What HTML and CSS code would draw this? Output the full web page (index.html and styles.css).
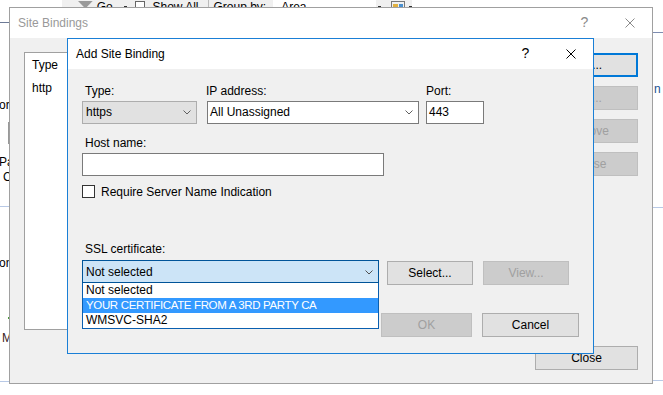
FILE: index.html
```html
<!DOCTYPE html>
<html lang="en">
<head>
<meta charset="utf-8">
<title>Add Site Binding</title>
<link rel="stylesheet" href="styles.css">
</head>
<body>
<div class="screen">
  <div class="bg">
    <div class="toolbar">
      <svg class="tb-funnel" width="15" height="7" viewBox="0 0 15 7"><path d="M0 1 H15 L9 7 H6 Z" fill="#9a9a9a"/></svg>
      <span class="tb-text tb-go">Go</span>
      <span class="tb-dash"></span>
      <span class="tb-check"></span>
      <span class="tb-text">Show All</span>
      <span class="tb-sep"></span>
      <span class="tb-text">Group by:</span>
      <span class="tb-field">Area</span>
      <span class="tb-dash tb-dash2"></span>
      <span class="tb-icon"><span class="tb-icon-a"></span><span class="tb-icon-b"></span></span>
      <span class="tb-dash tb-dash3"></span>
    </div>
    <span class="line line-dark l-22"></span>
    <span class="line line-navy r-32"></span>
    <span class="line line-light l-206"></span>
    <span class="line line-light r-207"></span>
    <span class="line line-light l-381"></span>
    <span class="line line-light r-380"></span>
    <span class="frag f-or">or</span>
    <span class="frag-box"></span>
    <span class="frag f-pa">Pa</span>
    <span class="frag f-c">C</span>
    <span class="frag f-on">on</span>
    <span class="frag-green"></span>
    <span class="frag f-m">M</span>
    <span class="frag f-n">n</span>
  </div>

  <div class="win sb">
    <div class="titlebar inactive">
      <span class="title">Site Bindings</span>
      <span class="cap cap-help">?</span>
      <span class="cap cap-close"><svg width="10" height="10" viewBox="0 0 10 10"><path d="M0.5 0.5 L9.5 9.5 M9.5 0.5 L0.5 9.5" stroke="#8a8a8a" stroke-width="1"/></svg></span>
    </div>
    <div class="sb-body">
      <div class="sb-list">
        <div class="sb-head">Type</div>
        <div class="sb-row">http</div>
      </div>
      <div class="sb-buttons">
        <div class="btn btn-default">Add...</div>
        <div class="btn btn-disabled">Edit...</div>
        <div class="btn btn-disabled">Remove</div>
        <div class="btn btn-disabled">Browse</div>
        <div class="btn sb-close">Close</div>
      </div>
    </div>
  </div>

  <div class="win asb">
    <div class="titlebar">
      <span class="title">Add Site Binding</span>
      <span class="cap cap-help">?</span>
      <span class="cap cap-close"><svg width="10" height="10" viewBox="0 0 10 10"><path d="M0.5 0.5 L9.5 9.5 M9.5 0.5 L0.5 9.5" stroke="#000" stroke-width="1"/></svg></span>
    </div>
    <div class="asb-body">
      <div class="row-fields">
        <div class="field f-type">
          <div class="lbl lbl-type">Type:</div>
          <div class="combo combo-ro"><span>https</span><svg class="chev" width="8" height="5" viewBox="0 0 8 5"><path d="M0.5 0.5 L4 4 L7.5 0.5" fill="none" stroke="#606060"/></svg></div>
        </div>
        <div class="field f-ip">
          <div class="lbl lbl-ip">IP address:</div>
          <div class="combo combo-edit"><span>All Unassigned</span><svg class="chev" width="8" height="5" viewBox="0 0 8 5"><path d="M0.5 0.5 L4 4 L7.5 0.5" fill="none" stroke="#606060"/></svg></div>
        </div>
        <div class="field f-port">
          <div class="lbl">Port:</div>
          <div class="textbox port-box">443</div>
        </div>
      </div>

      <div class="field f-host">
        <div class="lbl lbl-type">Host name:</div>
        <div class="textbox host-box"></div>
      </div>

      <div class="check-row">
        <span class="checkbox"></span>
        <span>Require Server Name Indication</span>
      </div>

      <div class="lbl lbl-type lbl-ssl">SSL certificate:</div>
      <div class="ssl-row">
        <div class="ssl-combo-wrap">
          <div class="combo combo-focus"><span>Not selected</span><svg class="chev" width="8" height="5" viewBox="0 0 8 5"><path d="M0.5 0.5 L4 4 L7.5 0.5" fill="none" stroke="#505050"/></svg></div>
          <ul class="dropdown">
            <li>Not selected</li>
            <li class="sel caps">YOUR CERTIFICATE FROM A 3RD PARTY CA</li>
            <li>WMSVC-SHA2</li>
          </ul>
        </div>
        <div class="btn btn-select">Select...</div>
        <div class="btn btn-disabled btn-view">View...</div>
      </div>

      <div class="actions">
        <div class="btn btn-disabled btn-ok">OK</div>
        <div class="btn btn-cancel">Cancel</div>
      </div>
    </div>
  </div>
</div>
</body>
</html>
```

FILE: styles.css
```css
* { box-sizing: border-box; }

body {
  margin: 0;
  font-family: "Liberation Sans", Arial, sans-serif;
  font-size: 12px;
  color: #000;
}

.screen {
  position: relative;
  width: 663px;
  height: 395px;
  overflow: hidden;
  background: #fff;
}

/* ---------- background application (behind the dialogs) ---------- */
.bg { position: absolute; inset: 0; }

.toolbar {
  position: absolute;
  top: 0;
  left: 62px;
  width: 350px;
  height: 16px;
  display: flex;
  align-items: flex-start;
  background: #f0f0f0;
  line-height: 15px;
  color: #000;
}
.tb-funnel { margin: 0 0 0 16px; }
.tb-text { white-space: nowrap; }
.tb-go { margin-left: 4px; }
.tb-dash { width: 3px; height: 1px; background: #333; margin: 6px 0 0 11px; }
.tb-check { width: 11px; height: 11px; border: 1px solid #666; background: #fff; margin: 1px 7px 0 8px; }
.tb-sep { width: 1px; height: 12px; background: #bbb; margin: 0 4px 0 10px; }
.tb-field { width: 105px; background: #fff; padding-left: 8px; margin-left: 7px; align-self: stretch; }
.tb-dash2 { margin-left: 2px; }
.tb-icon { width: 14px; height: 10px; border: 1px solid #777; margin: 1px 0 0 10px; display: flex; gap: 1px; padding: 2px 1px 0; }
.tb-icon-a { width: 5px; height: 5px; background: #e0b040; }
.tb-icon-b { width: 5px; height: 5px; background: #4a90d0; }
.tb-dash3 { margin-left: 4px; }

.line { position: absolute; height: 1px; }
.line-dark { background: #6c7a96; }
.line-navy { background: #7d8cb0; }
.line-light { background: #b8c9e6; }
.l-22 { top: 22px; left: 0; width: 10px; }
.l-206 { top: 206px; left: 0; width: 10px; }
.l-381 { top: 381px; left: 0; width: 10px; }
.r-32 { top: 32px; left: 652px; width: 11px; }
.r-207 { top: 207px; left: 652px; width: 11px; }
.r-380 { top: 380px; left: 652px; width: 11px; }

.frag { position: absolute; line-height: 15px; white-space: nowrap; }
.f-or { left: -1px; top: 98px; }
.f-pa { left: -1px; top: 155px; }
.f-c { left: 3px; top: 170px; }
.f-on { left: -1px; top: 256px; }
.f-m { left: 2px; top: 331px; color: #3a2020; }
.f-n { left: 654px; top: 82px; color: #1d4f91; }
.frag-box { position: absolute; left: 8px; top: 122px; width: 4px; height: 22px; border: 1px solid #999; background: #eee; }
.frag-green { position: absolute; left: 8px; top: 317px; width: 2px; height: 2px; background: #4c9a3a; }

/* ---------- windows ---------- */
.win {
  position: absolute;
  display: flex;
  flex-direction: column;
  background: #f0f0f0;
}

.titlebar {
  height: 30px;
  flex: none;
  display: flex;
  align-items: center;
  background: #fff;
}
.title { flex: 1; padding-left: 8px; white-space: nowrap; }
.inactive .title { color: #999; }
.cap {
  width: 45px;
  height: 30px;
  display: flex;
  align-items: center;
  justify-content: center;
}
.cap-help { font-size: 14px; padding-bottom: 2px; }
.inactive .cap-help { color: #8a8a8a; }

/* Site Bindings */
.sb {
  left: 9px;
  top: 7px;
  width: 644px;
  height: 377px;
  border: 1px solid #a0a0a0;
}
.sb-body {
  flex: 1;
  display: flex;
  gap: 14px;
  padding: 14px 14px 13px 14px;
}
.sb-list {
  flex: 1;
  height: 278px;
  background: #fff;
  border: 1px solid #a0a0a0;
  padding-left: 7px;
}
.sb-head { line-height: 25px; }
.sb-row { line-height: 20px; }
.sb-buttons {
  width: 103px;
  display: flex;
  flex-direction: column;
  gap: 9px;
  padding-top: 1px;
}
.sb-close { margin-top: auto; }

/* Add Site Binding */
.asb {
  left: 67px;
  top: 38px;
  width: 527px;
  height: 316px;
  border: 1px solid #1a7fd6;
}
.asb-body {
  flex: 1;
  display: flex;
  flex-direction: column;
  padding: 15px 14px 0 14px;
}

.row-fields { display: flex; }
.field { display: flex; flex-direction: column; }
.f-type { width: 115px; margin-right: 10px; }
.f-ip { width: 212px; margin-right: 7px; }
.f-port { width: 58px; }

.lbl { line-height: 15px; margin-bottom: 2px; white-space: nowrap; }
.lbl-type { padding-left: 3px; }
.lbl-ip { margin-left: -1px; }

.combo, .textbox {
  height: 23px;
  line-height: 21px;
  white-space: nowrap;
}
.combo {
  display: flex;
  align-items: center;
  justify-content: space-between;
  padding: 0 5px 0 3px;
}
.combo-ro { background: #e1e1e1; border: 1px solid #adadad; }
.combo-edit { background: #fff; border: 1px solid #7a7a7a; padding-left: 2px; }
.combo-focus { background: #cce4f7; border: 1px solid #005499; padding-top: 1px; }
.chev { flex: none; }

.textbox { background: #fff; border: 1px solid #7a7a7a; padding-left: 2px; }

.f-host { margin-top: 12px; width: 302px; }

.check-row {
  margin-top: 9px;
  height: 13px;
  display: flex;
  align-items: center;
  gap: 6px;
  white-space: nowrap;
}
.checkbox {
  width: 13px;
  height: 13px;
  border: 1px solid #333;
  background: #fff;
  flex: none;
}

.lbl-ssl { margin-top: 44px; margin-bottom: 3px; }

.ssl-row { display: flex; align-items: flex-start; }
.ssl-combo-wrap { position: relative; width: 297px; margin-right: 8px; }
.dropdown {
  position: absolute;
  left: 0;
  top: 23px;
  width: 297px;
  margin: 0;
  padding: 0;
  list-style: none;
  background: #fff;
  border: 1px solid #0a5fb0;
  border-top: 0;
  z-index: 2;
}
.dropdown li {
  line-height: 15px;
  padding-left: 3px;
  white-space: nowrap;
}
.dropdown li.sel { background: #3399ff; color: #fff; }
.dropdown li.caps { font-size: 11.5px; letter-spacing: -0.35px; }

.btn {
  height: 24px;
  display: flex;
  align-items: center;
  justify-content: center;
  background: #e1e1e1;
  border: 1px solid #adadad;
  white-space: nowrap;
  flex: none;
}
.btn-default { border: 2px solid #0078d7; }
.btn-disabled { background: #cccccc; border-color: #bfbfbf; color: #a0a0a0; }

.btn-select { width: 86px; margin-top: 1px; margin-right: 10px; }
.btn-view { width: 86px; margin-top: 1px; }

.actions {
  margin-top: 28px;
  display: flex;
  justify-content: flex-end;
  gap: 10px;
}
.btn-ok { width: 91px; }
.btn-cancel { width: 97px; }
```
